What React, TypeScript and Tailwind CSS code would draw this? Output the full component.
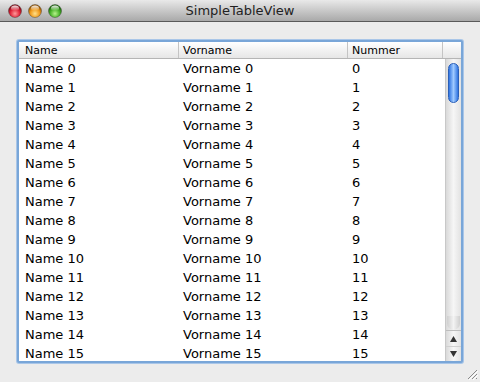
import React from "react";

const rows = Array.from({ length: 16 }, (_, i) => i);

function Light({ id, c1, c2, c3 }: { id: string; c1: string; c2: string; c3: string }) {
  return (
    <svg width="14" height="14" viewBox="0 0 14 14">
      <defs>
        <radialGradient id={id} cx="50%" cy="70%" r="60%">
          <stop offset="0%" stopColor={c1} />
          <stop offset="60%" stopColor={c2} />
          <stop offset="100%" stopColor={c3} />
        </radialGradient>
        <linearGradient id={id + "h"} x1="0" y1="0" x2="0" y2="1">
          <stop offset="0%" stopColor="#fff" stopOpacity="0.9" />
          <stop offset="100%" stopColor="#fff" stopOpacity="0" />
        </linearGradient>
      </defs>
      <circle cx="7" cy="7" r="6.5" fill={`url(#${id})`} stroke="rgba(0,0,0,0.35)" strokeWidth="0.8" />
      <ellipse cx="7" cy="4.2" rx="4" ry="2.6" fill={`url(#${id}h)`} />
    </svg>
  );
}

export default function App() {
  return (
    <div
      className="w-[480px] h-[382px] bg-[#ececec] flex flex-col overflow-hidden relative"
      style={{ fontFamily: '"DejaVu Sans", "Liberation Sans", sans-serif' }}
    >
      {/* title bar */}
      <div className="h-[22px] shrink-0 flex items-center relative bg-gradient-to-b from-[#e9e9e9] to-[#a9a9a9] border-b border-[#5a5a5a]">
        <div className="flex items-center gap-[6px] pl-[8px]">
          <Light id="r" c1="#ff9a9a" c2="#e0263a" c3="#8c0d1a" />
          <Light id="y" c1="#ffe08a" c2="#f09a1c" c3="#9a5a08" />
          <Light id="g" c1="#b6f28a" c2="#48b22a" c3="#1e6a10" />
        </div>
        <div className="absolute inset-0 flex items-center justify-center text-[13px] text-[#222] pointer-events-none">
          SimpleTableView
        </div>
      </div>

      {/* content */}
      <div className="pl-[17px] pt-[18px]">
        <div className="w-[446px] h-[323px] border-2 border-[#79a6d8] rounded-[2px] bg-white flex overflow-hidden shadow-[0_0_0_1px_#a9c6e8]">
          <div className="flex-1 flex flex-col min-w-0">
            {/* header */}
            <div className="h-[17px] shrink-0 flex text-[11px] leading-[13px] text-black bg-gradient-to-b from-white to-[#e6e6e6] border-b border-[#b5b5b5]">
              <div className="w-[160px] pl-[6px] border-r border-[#c4c4c4] flex items-center">Name</div>
              <div className="w-[169px] pl-[4px] border-r border-[#c4c4c4] flex items-center">Vorname</div>
              <div className="w-[95px] pl-[4px] border-r border-[#c4c4c4] flex items-center">Nummer</div>
              <div className="flex-1" />
            </div>
            <div className="flex flex-1 min-h-0">
              <div className="flex-1 overflow-hidden text-[13px] leading-[14px] text-black">
                {rows.map((i) => (
                  <div key={i} className="h-[19px] flex items-center">
                    <div className="w-[160px] pl-[6px]">Name {i}</div>
                    <div className="w-[169px] pl-[4px]">Vorname {i}</div>
                    <div className="w-[95px] pl-[4px]">{i}</div>
                  </div>
                ))}
              </div>
              {/* scrollbar */}
              <div className="w-[16px] shrink-0 flex flex-col bg-gradient-to-r from-[#d9d9d9] via-[#f6f6f6] to-[#e2e2e2] border-l border-[#c8c8c8]">
                <div className="flex-1 relative">
                  <div className="absolute left-[2px] top-[4px] w-[11px] h-[40px] rounded-full border border-[#2a5fb8] bg-gradient-to-r from-[#2f74e0] via-[#9fcaff] to-[#2f74e0]" />
                  <div className="absolute left-[1px] bottom-[0px] w-[13px] h-[14px] rounded-b-full bg-gradient-to-r from-[#cfcfcf] via-[#f3f3f3] to-[#cfcfcf]" />
                </div>
                <div className="h-[16px] flex items-center justify-center border-t border-[#bdbdbd]">
                  <svg width="7" height="6" viewBox="0 0 7 6"><path d="M3.5 0 L7 6 L0 6 Z" fill="#333" /></svg>
                </div>
                <div className="h-[15px] flex items-center justify-center border-t border-[#d0d0d0]">
                  <svg width="7" height="6" viewBox="0 0 7 6"><path d="M0 0 L7 0 L3.5 6 Z" fill="#333" /></svg>
                </div>
              </div>
            </div>
          </div>
        </div>
      </div>

      {/* resize grip */}
      <svg className="absolute right-[2px] bottom-[2px]" width="12" height="12" viewBox="0 0 12 12">
        <path d="M11 2 L2 11 M11 6 L6 11 M11 10 L10 11" stroke="#8a8a8a" strokeWidth="1" />
        <path d="M12 3 L3 12 M12 7 L7 12" stroke="#fff" strokeWidth="1" />
      </svg>
    </div>
  );
}
